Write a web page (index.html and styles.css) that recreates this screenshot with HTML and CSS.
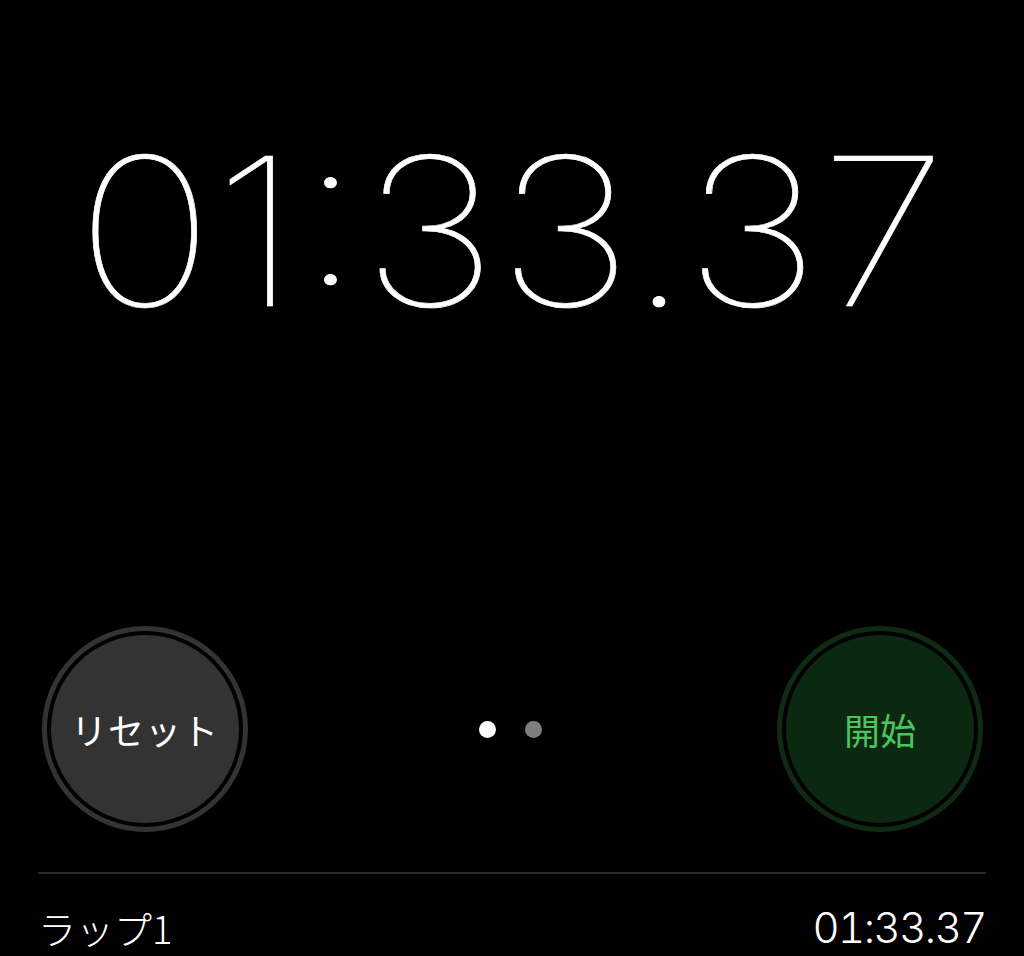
FILE: index.html
```html
<!DOCTYPE html>
<html lang="ja">
<head>
<meta charset="utf-8">
<link rel="stylesheet" href="styles.css">
</head>
<body>
<main class="screen">
  <div class="time"><span class="time-text">01:33.37</span></div>
  <div class="controls">
    <div class="btn btn-reset"><div class="btn-inner">リセット</div></div>
    <div class="dots"><span class="dot dot-on"></span><span class="dot dot-off"></span></div>
    <div class="btn btn-start"><div class="btn-inner">開始</div></div>
  </div>
  <div class="laps">
    <div class="lap-row"><span class="lap-name">ラップ1</span><span class="lap-time">01:33.37</span></div>
  </div>
</main>
</body>
</html>
```
FILE: styles.css
```css
html, body {
  margin: 0;
  padding: 0;
  background: #000;
}
.screen {
  width: 1024px;
  height: 956px;
  overflow: hidden;
  display: flex;
  flex-direction: column;
  color: #fff;
  font-family: Inter, "Noto Sans CJK JP", sans-serif;
}
.time {
  margin-top: 124px;
  text-align: center;
  font-size: 206px;
  font-weight: 100;
  line-height: 214px;
  padding-right: 2px;
}
.time-text {
  display: inline-block;
  transform: scaleX(1.13);
  -webkit-text-stroke: 0.6px #fff;
}
.controls {
  margin-top: 288px;
  display: flex;
  align-items: center;
  justify-content: space-between;
  padding: 0 41px 0 42px;
}
.btn {
  width: 206px;
  height: 206px;
  border-radius: 50%;
  border: 5px solid #333;
  padding: 4px;
  box-sizing: border-box;
}
.btn-inner {
  width: 100%;
  height: 100%;
  border-radius: 50%;
  display: flex;
  align-items: center;
  justify-content: center;
  font-family: "Noto Sans CJK JP", sans-serif;
  font-size: 36px;
  font-weight: 400;
}
.btn-reset .btn-inner {
  background: #333;
  color: #fff;
  letter-spacing: 1px;
}
.btn-start {
  border-color: #0f2b14;
}
.btn-start .btn-inner {
  background: #0b2910;
  color: #4ec45e;
}
.dots {
  display: flex;
  gap: 29px;
  margin-right: 4px;
}
.dot {
  width: 17px;
  height: 17px;
  border-radius: 50%;
}
.dot-on { background: #fff; }
.dot-off { background: #7f7f7f; }
.laps {
  margin: 40px 38px 0 38px;
  border-top: 2px solid #2a2a2a;
}
.lap-row {
  display: flex;
  justify-content: space-between;
  align-items: center;
  height: 106px;
}
.lap-name {
  font-family: "Noto Sans CJK JP", sans-serif;
  font-size: 38px;
  font-weight: 300;
}
.lap-time {
  font-family: Inter, sans-serif;
  font-size: 42px;
  font-weight: 300;
  font-variant-numeric: tabular-nums;
  letter-spacing: -1.5px;
}
```
